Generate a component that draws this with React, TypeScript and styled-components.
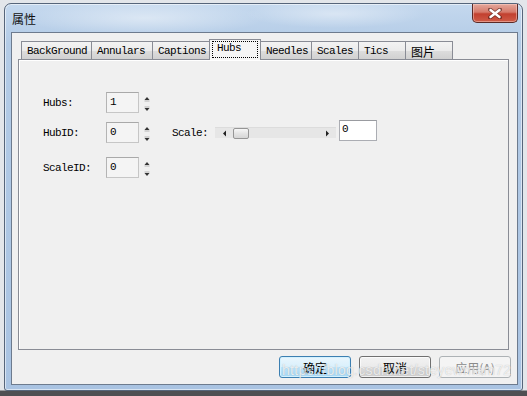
import styled, { createGlobalStyle, css } from "styled-components";

const GlobalStyle = createGlobalStyle`
  html, body {
    margin: 0;
    padding: 0;
  }
  body {
    width: 527px;
    height: 396px;
    overflow: hidden;
    background: linear-gradient(to bottom, #e3e6ea 0, #e3e6ea 390px, #4f4f52 391px);
    font-family: "Liberation Mono", monospace;
  }
`;

const Page = styled.div`
  padding: 3px 4px 0 4px;
`;

const Window = styled.div`
  position: relative;
  box-sizing: border-box;
  width: 519px;
  height: 388px;
  display: flex;
  flex-direction: column;
  padding: 0 4px 5px 6px;
  border: 1px solid #56657a;
  border-radius: 7px 7px 3px 3px;
  background:
    radial-gradient(ellipse 120px 18px at 140px 14px, rgba(255, 255, 255, 0.45), transparent),
    radial-gradient(ellipse 90px 14px at 330px 10px, rgba(255, 255, 255, 0.4), transparent),
    linear-gradient(to bottom, #c4d8ee 0, #b3cbe6 40px, #a9c3e2 100%);
  box-shadow: inset 0 0 0 1px rgba(255, 255, 255, 0.55);
`;

const TitleBar = styled.div`
  height: 28px;
  display: flex;
  align-items: center;
  justify-content: space-between;
  padding-left: 1px;
`;

const Title = styled.span`
  font-family: "Noto Sans CJK SC", sans-serif;
  font-size: 12px;
  color: #111;
  margin-top: 1px;
`;

const CloseButton = styled.div`
  align-self: flex-start;
  width: 46px;
  height: 19px;
  display: flex;
  align-items: center;
  justify-content: center;
  box-sizing: border-box;
  border: 1px solid #5b2a27;
  border-top: none;
  border-radius: 0 0 5px 5px;
  background: linear-gradient(to bottom, #e4a89c 0, #d67a6b 45%, #c2402f 55%, #cf5c48 100%);
  box-shadow: inset 0 0 0 1px rgba(255, 220, 210, 0.45);
`;

const Client = styled.div`
  flex: 1;
  display: flex;
  flex-direction: column;
  padding: 6px 6px 6px 6px;
  border: 1px solid #6d7b8e;
  background: #f0f0f0;
`;

const TabControl = styled.div`
  flex: 1;
  display: flex;
  flex-direction: column;
  margin-right: 2px;
`;

const TabStrip = styled.div`
  height: 20px;
  display: flex;
  align-items: flex-end;
  padding-left: 3px;
`;

const Tab = styled.div<{ $w: number; $active?: boolean }>`
  position: relative;
  box-sizing: border-box;
  width: ${(p) => p.$w}px;
  height: 18px;
  margin-left: -1px;
  padding: 2px 0 0 5px;
  border: 1px solid #898c95;
  border-bottom: none;
  font-size: 11px;
  letter-spacing: -0.6px;
  line-height: 15px;
  color: #000;
  white-space: nowrap;
  background: linear-gradient(to bottom, #f3f3f3 0, #ebebeb 50%, #dddddd 51%, #d1d1d1 100%);

  &:first-child {
    margin-left: 0;
  }

  ${(p) =>
    p.$active &&
    css`
      z-index: 1;
      width: ${p.$w + 1}px;
      height: 21px;
      margin-left: -2px;
      margin-bottom: -1px;
      padding: 1px 2px 0 2px;
      background: #f5f5f5;
    `}
`;

const FocusRect = styled.span`
  display: block;
  height: 17px;
  padding-left: 4px;
  border: 1px dotted #000;
  box-sizing: border-box;
  line-height: 13px;
`;

const CjkText = styled.span`
  font-family: "Noto Sans CJK SC", sans-serif;
  font-size: 12px;
  letter-spacing: 0;
`;

const Panel = styled.div`
  flex: 1;
  border: 1px solid #898c95;
  background: #f0f0f0;
  box-shadow: inset 1px 1px 0 #fff;
  padding: 32px 0 0 24px;
  display: flex;
  flex-direction: column;
`;

const Row = styled.div<{ $top: number }>`
  display: flex;
  align-items: center;
  margin-top: ${(p) => p.$top}px;
`;

const Label = styled.span<{ $w?: number }>`
  width: ${(p) => p.$w ?? 63}px;
  font-size: 11px;
  letter-spacing: -0.6px;
  color: #000;
  white-space: nowrap;
`;

const NumBox = styled.div`
  box-sizing: border-box;
  width: 33px;
  height: 21px;
  padding: 2px 0 0 3px;
  border: 1px solid #c6c6c6;
  border-top-color: #a9a9a9;
  border-left-color: #b4b4b4;
  background: #f4f4f4;
  font-size: 11px;
  line-height: 14px;
  color: #000;
`;

const SpinWrap = styled.div`
  width: 10px;
  height: 20px;
  margin-left: 3px;
  display: flex;
`;

const ScaleTrack = styled.div`
  box-sizing: border-box;
  width: 121px;
  height: 11px;
  margin-left: 6px;
  display: flex;
  align-items: center;
  background: #e6e6e6;
  border-top: 1px solid #dcdcdc;
`;

const TrackArrow = styled.div`
  width: 18px;
  display: flex;
  align-items: center;
  justify-content: center;
`;

const Thumb = styled.div`
  box-sizing: border-box;
  width: 16px;
  height: 11px;
  border: 1px solid #969696;
  border-radius: 2px;
  background: linear-gradient(to bottom, #f7f7f7, #e4e4e4 50%, #d6d6d6);
`;

const TrackRest = styled.div`
  flex: 1;
`;

const TextBox = styled.div`
  box-sizing: border-box;
  width: 38px;
  height: 21px;
  margin-left: 3px;
  margin-top: -4px;
  padding: 1px 0 0 2px;
  border: 1px solid #abadb3;
  border-top-color: #999ba0;
  background: #fff;
  font-size: 11px;
  line-height: 14px;
`;

const ButtonRow = styled.div`
  display: flex;
  justify-content: flex-end;
  gap: 8px;
  margin-top: 6px;
`;

const Button = styled.div<{ $variant?: "default" | "disabled" }>`
  box-sizing: border-box;
  width: 72px;
  height: 22px;
  display: flex;
  align-items: center;
  justify-content: center;
  border: 1px solid #707070;
  border-radius: 3px;
  font-family: "Noto Sans CJK SC", sans-serif;
  font-size: 12px;
  color: #000;
  background: linear-gradient(to bottom, #f2f2f2 0, #ebebeb 50%, #dddddd 51%, #cfcfcf 100%);
  box-shadow: inset 0 0 0 1px rgba(255, 255, 255, 0.7);

  ${(p) =>
    p.$variant === "default" &&
    css`
      border-color: #3c7fb1;
      background: linear-gradient(to bottom, #eaf6fd 0, #d9f0fc 50%, #bee6fd 51%, #a7d9f5 100%);
      box-shadow: inset 0 0 0 1px #d3f1fe;
    `}

  ${(p) =>
    p.$variant === "disabled" &&
    css`
      border-color: #adb2b5;
      background: #f4f4f4;
      color: #8a8a8a;
      box-shadow: none;
    `}
`;

const Watermark = styled.span`
  position: absolute;
  left: 277px;
  top: 358px;
  font-family: "Liberation Sans", sans-serif;
  font-size: 14px;
  letter-spacing: 0.3px;
  color: rgba(255, 255, 255, 0.75);
  text-shadow: 0 0 1px rgba(120, 120, 120, 0.5);
  pointer-events: none;
  white-space: nowrap;
`;

function CloseGlyph() {
  return (
    <svg width="14" height="11" viewBox="0 0 14 11">
      <path d="M2 1.5 L12 9.5 M12 1.5 L2 9.5" stroke="#3b1512" strokeWidth="4" strokeLinecap="round" opacity="0.55" />
      <path d="M2.5 2 L11.5 9 M11.5 2 L2.5 9" stroke="#fff" strokeWidth="2.4" strokeLinecap="round" />
    </svg>
  );
}

function Spinner() {
  return (
    <SpinWrap>
      <svg width="10" height="20" viewBox="0 0 10 20">
        <path d="M2.5 7 L5 4 L7.5 7 Z" fill="#333" />
        <path d="M2.5 15 L5 18 L7.5 15 Z" fill="#333" />
        <line x1="2.5" y1="8" x2="7.5" y2="8" stroke="#b5b5b5" />
        <line x1="2.5" y1="14" x2="7.5" y2="14" stroke="#b5b5b5" />
      </svg>
    </SpinWrap>
  );
}

function ArrowGlyph({ dir }: { dir: "left" | "right" }) {
  return (
    <svg width="5" height="7" viewBox="0 0 5 7">
      {dir === "left" ? <path d="M4 0.5 L1 3.5 L4 6.5 Z" fill="#222" /> : <path d="M1 0.5 L4 3.5 L1 6.5 Z" fill="#222" />}
    </svg>
  );
}

const tabs = [
  { label: "BackGround", w: 71 },
  { label: "Annulars", w: 62 },
  { label: "Captions", w: 59 },
  { label: "Hubs", w: 51, active: true },
  { label: "Needles", w: 52 },
  { label: "Scales", w: 48 },
  { label: "Tics", w: 48 },
  { label: "图片", w: 48, cjk: true },
];

export default function App() {
  return (
    <>
      <GlobalStyle />
      <Page>
        <Window>
          <TitleBar>
            <Title>属性</Title>
            <CloseButton>
              <CloseGlyph />
            </CloseButton>
          </TitleBar>
          <Client>
            <TabControl>
              <TabStrip>
                {tabs.map((t) => (
                  <Tab key={t.label} $w={t.w} $active={t.active}>
                    {t.active ? (
                      <FocusRect>{t.label}</FocusRect>
                    ) : t.cjk ? (
                      <CjkText>{t.label}</CjkText>
                    ) : (
                      t.label
                    )}
                  </Tab>
                ))}
              </TabStrip>
              <Panel>
                <Row $top={0}>
                  <Label>Hubs:</Label>
                  <NumBox>1</NumBox>
                  <Spinner />
                </Row>
                <Row $top={9}>
                  <Label>HubID:</Label>
                  <NumBox>0</NumBox>
                  <Spinner />
                  <Label $w={37} style={{ marginLeft: 20 }}>
                    Scale:
                  </Label>
                  <ScaleTrack>
                    <TrackArrow>
                      <ArrowGlyph dir="left" />
                    </TrackArrow>
                    <Thumb />
                    <TrackRest />
                    <TrackArrow>
                      <ArrowGlyph dir="right" />
                    </TrackArrow>
                  </ScaleTrack>
                  <TextBox>0</TextBox>
                </Row>
                <Row $top={14}>
                  <Label>ScaleID:</Label>
                  <NumBox>0</NumBox>
                  <Spinner />
                </Row>
              </Panel>
            </TabControl>
            <ButtonRow>
              <Button $variant="default">确定</Button>
              <Button>取消</Button>
              <Button $variant="disabled">应用(A)</Button>
            </ButtonRow>
          </Client>
          <Watermark>https://blog.csdn.net/steyewmam72</Watermark>
        </Window>
      </Page>
    </>
  );
}
